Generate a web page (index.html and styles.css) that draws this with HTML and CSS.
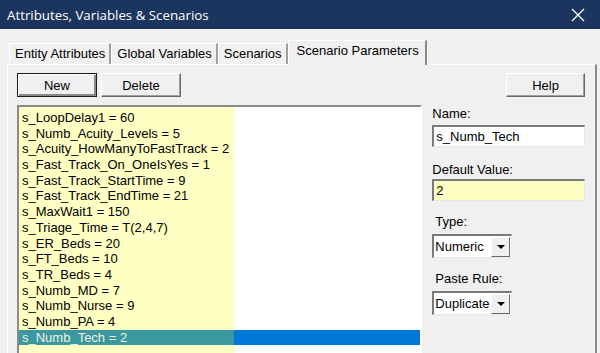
FILE: index.html
```html
<!DOCTYPE html>
<html lang="en">
<head>
  <meta charset="UTF-8" />
  <title>Attributes, Variables &amp; Scenarios</title>
  <link rel="stylesheet" href="styles.css">
</head>
<body>
  <div class="window">
    <div class="titlebar">
      <span class="title">Attributes, Variables &amp; Scenarios</span>
      <svg class="close" width="14" height="14" viewBox="0 0 14 14">
        <path d="M1 1 L13 13 M13 1 L1 13" stroke="#fff" stroke-width="1.3" fill="none"/>
      </svg>
    </div>

    <div class="tabs">
      <div class="tab">Entity Attributes</div>
      <div class="tab">Global Variables</div>
      <div class="tab">Scenarios</div>
      <div class="tab active">Scenario Parameters</div>
    </div>

    <div class="panel">
      <div class="toolbar">
        <button class="btn default">New</button>
        <button class="btn">Delete</button>
        <span class="spacer"></span>
        <button class="btn help">Help</button>
      </div>

      <div class="content">
        <div class="listbox">
          <div class="row">s_LoopDelay1 = 60</div>
          <div class="row">s_Numb_Acuity_Levels = 5</div>
          <div class="row">s_Acuity_HowManyToFastTrack = 2</div>
          <div class="row">s_Fast_Track_On_OneIsYes = 1</div>
          <div class="row">s_Fast_Track_StartTime = 9</div>
          <div class="row">s_Fast_Track_EndTime = 21</div>
          <div class="row">s_MaxWait1 = 150</div>
          <div class="row">s_Triage_Time = T(2,4,7)</div>
          <div class="row">s_ER_Beds = 20</div>
          <div class="row">s_FT_Beds = 10</div>
          <div class="row">s_TR_Beds = 4</div>
          <div class="row">s_Numb_MD = 7</div>
          <div class="row">s_Numb_Nurse = 9</div>
          <div class="row">s_Numb_PA = 4</div>
          <div class="row selected">s_Numb_Tech = 2</div>
        </div>

        <div class="side">
          <label class="field-label first">Name:</label>
          <div class="textbox">s_Numb_Tech</div>

          <label class="field-label">Default Value:</label>
          <div class="textbox yellow">2</div>

          <label class="field-label indent">Type:</label>
          <div class="combo">
            <span class="combo-text">Numeric</span>
            <span class="combo-btn"><span class="arrow"></span></span>
          </div>

          <label class="field-label indent">Paste Rule:</label>
          <div class="combo">
            <span class="combo-text">Duplicate</span>
            <span class="combo-btn"><span class="arrow"></span></span>
          </div>
        </div>
      </div>
    </div>
  </div>
</body>
</html>
```

FILE: styles.css
```css
body {
  margin: 0;
  font-family: "Liberation Sans", Arial, sans-serif;
  background-color: #f0f0f0;
}

.window {
  width: 600px;
  height: 353px;
  overflow: hidden;
  background-color: #f0f0f0;
}

.titlebar {
  height: 29px;
  background-color: #1c355e;
  color: #ffffff;
  display: flex;
  align-items: center;
  justify-content: space-between;
  padding: 0 15px 0 7px;
}

.title {
  font-family: "Open Sans", sans-serif;
  font-size: 13.3px;
}

.tabs {
  display: flex;
  align-items: flex-end;
  height: 35px;
  padding-left: 9px;
  font-size: 13px;
  color: #000;
}

.tab {
  height: 20px;
  line-height: 19px;
  padding: 0 4px 0 5px;
  border-top: 1px solid #ffffff;
  border-left: 1px solid #ffffff;
  border-right: 2px solid #a0a0a0;
}

.tab.active {
  height: 24px;
  line-height: 20px;
  padding: 0 6px 0 8px;
  margin-bottom: -1px;
  background-color: #f0f0f0;
  border-right: 2px solid #8a8a8a;
}

.panel {
  margin-left: 7px;
  margin-right: 3px;
  height: 300px;
  border-top: 1px solid #ffffff;
  border-left: 1px solid #ffffff;
  border-right: 2px solid #8a8a8a;
  padding: 8px 10px 0 9px;
}

.toolbar {
  display: flex;
  gap: 4px;
}

.spacer {
  flex: 1;
}

.btn {
  width: 80px;
  height: 24px;
  padding: 0;
  font-family: "Liberation Sans", Arial, sans-serif;
  font-size: 13px;
  color: #000;
  background-color: #f0f0f0;
  border: 1px solid;
  border-color: #ffffff #696969 #696969 #ffffff;
  box-shadow: inset -1px -1px 0 #a0a0a0;
}

.btn.default {
  border: 1px solid #1a1a1a;
  box-shadow: inset 1px 1px 0 #ffffff, inset -2px -2px 0 #8a8a8a;
}

.btn.help {
  width: 79px;
}

.content {
  display: flex;
  gap: 10px;
  margin-top: 8px;
}

.listbox {
  width: 402px;
  height: 260px;
  border-top: 2px solid #8a8a8a;
  border-left: 2px solid #8a8a8a;
  border-right: 2px solid #ffffff;
  padding-top: 3px;
  font-size: 13px;
  background: linear-gradient(to right, #ffffc4 0, #ffffc4 215px, #ffffff 215px);
}

.row {
  height: 15.7px;
  line-height: 15.7px;
  padding-left: 3px;
  white-space: nowrap;
  color: #000;
}

.row.selected {
  color: #eef2e0;
  background: linear-gradient(to right, #3a98a0 0, #3a98a0 215px, #0078d7 215px);
}

.side {
  width: 153px;
  display: flex;
  flex-direction: column;
  font-size: 13px;
}

.field-label {
  display: block;
  height: 17px;
  line-height: 17px;
  margin-top: 14px;
  margin-bottom: 1px;
  color: #000;
}

.field-label.first {
  margin-top: 0;
  margin-bottom: 3px;
}

.field-label.indent {
  padding-left: 3px;
  margin-top: 12px;
  margin-bottom: 4px;
}

.textbox {
  height: 19px;
  line-height: 19px;
  padding-left: 2px;
  background-color: #ffffff;
  border-top: 2px solid #7a7a7a;
  border-left: 2px solid #7a7a7a;
  border-bottom: 1px solid #e8e8e8;
  border-right: 1px solid #e8e8e8;
}

.textbox.yellow {
  background-color: #ffffc4;
}

.combo {
  width: 77px;
  height: 21px;
  display: flex;
  background-color: #ffffff;
  border-top: 2px solid #7a7a7a;
  border-left: 2px solid #7a7a7a;
  border-bottom: 1px solid #e8e8e8;
  border-right: 1px solid #e8e8e8;
}

.combo-text {
  flex: 1;
  line-height: 21px;
  padding-left: 1px;
  overflow: hidden;
  white-space: nowrap;
}

.combo-btn {
  width: 17px;
  height: 18px;
  margin: 1px 1px 0 0;
  background-color: #f0f0f0;
  border: 1px solid;
  border-color: #ffffff #696969 #696969 #ffffff;
  display: flex;
  align-items: center;
  justify-content: center;
}

.arrow {
  width: 0;
  height: 0;
  border-left: 4px solid transparent;
  border-right: 4px solid transparent;
  border-top: 4px solid #000;
}
```
